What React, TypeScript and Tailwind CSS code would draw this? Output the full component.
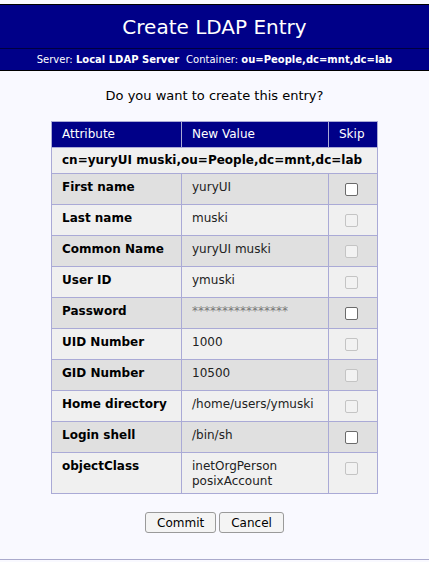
const rows: { label: string; value: string[]; enabled: boolean; dark: boolean }[] = [
  { label: "First name", value: ["yuryUI"], enabled: true, dark: true },
  { label: "Last name", value: ["muski"], enabled: false, dark: false },
  { label: "Common Name", value: ["yuryUI muski"], enabled: false, dark: true },
  { label: "User ID", value: ["ymuski"], enabled: false, dark: false },
  { label: "Password", value: ["****************"], enabled: true, dark: true },
  { label: "UID Number", value: ["1000"], enabled: false, dark: false },
  { label: "GID Number", value: ["10500"], enabled: false, dark: true },
  { label: "Home directory", value: ["/home/users/ymuski"], enabled: false, dark: false },
  { label: "Login shell", value: ["/bin/sh"], enabled: true, dark: true },
  { label: "objectClass", value: ["inetOrgPerson", "posixAccount"], enabled: false, dark: false },
];

function Box({ enabled }: { enabled: boolean }) {
  return (
    <span
      className={`mt-[3px] ml-[6px] block h-[13px] w-[13px] rounded-[2px] border ${
        enabled ? "border-[#6b6b6b] bg-white" : "border-[#c4c4c4] bg-[#f2f2f2]"
      }`}
    />
  );
}

export default function App() {
  return (
    <div className="min-h-[562px] bg-[#f9f9ff] pt-1 font-['DejaVu_Sans',sans-serif] text-black">
      <div className="border-t border-b border-black bg-[#000088] text-white">
        <div className="flex h-[44px] items-center justify-center border-b border-[#000040] text-[20px]">
          Create LDAP Entry
        </div>
        <div className="flex h-[21px] items-center justify-center text-[10px]">
          <span>
            Server: <b>Local LDAP Server</b>
          </span>
          <span className="ml-[7px]">
            Container: <b>ou=People,dc=mnt,dc=lab</b>
          </span>
        </div>
      </div>

      <p className="mt-[15px] text-center text-[13px] leading-[20px]">Do you want to create this entry?</p>

      <table className="mx-auto mt-[15px] w-[327px] border-collapse text-[12px] leading-[15px]">
        <thead>
          <tr className="h-[26px] bg-[#000088] text-left text-white">
            <th className="w-[130px] border border-[#aaaad6] pl-[10px] font-normal">Attribute</th>
            <th className="w-[147px] border border-[#aaaad6] pl-[10px] font-normal">New Value</th>
            <th className="border border-[#aaaad6] pl-[10px] font-normal">Skip</th>
          </tr>
        </thead>
        <tbody>
          <tr className="h-[26px] bg-[#f0f0f0]">
            <td colSpan={3} className="border border-[#aaaad6] pl-[10px] font-bold">
              cn=yuryUI muski,ou=People,dc=mnt,dc=lab
            </td>
          </tr>
          {rows.map((r) => (
            <tr key={r.label} className={r.dark ? "bg-[#e0e0e0]" : "bg-[#f0f0f0]"}>
              <td className="h-[31px] border border-[#aaaad6] pt-[6px] pb-[4px] pl-[10px] align-top font-bold">
                {r.label}
              </td>
              <td className="border border-[#aaaad6] pt-[6px] pb-[4px] pl-[10px] align-top text-[#222]">
                {r.label === "Password" ? (
                  <span className="text-[#777]">{r.value[0]}</span>
                ) : (
                  r.value.map((v) => <div key={v}>{v}</div>)
                )}
              </td>
              <td className="border border-[#aaaad6] pt-[6px] pb-[4px] pl-[10px] align-top">
                <Box enabled={r.enabled} />
              </td>
            </tr>
          ))}
        </tbody>
      </table>

      <div className="mt-[18px] flex justify-center gap-[3px]">
        <button className="h-[21px] rounded-[3px] border border-[#9a9a9a] bg-[#f4f4f4] px-[11px] text-[12px]">
          Commit
        </button>
        <button className="h-[21px] rounded-[3px] border border-[#9a9a9a] bg-[#f4f4f4] px-[11px] text-[12px]">
          Cancel
        </button>
      </div>

      <div className="mt-[26px] border-t border-[#aaaacc]" />
    </div>
  );
}
